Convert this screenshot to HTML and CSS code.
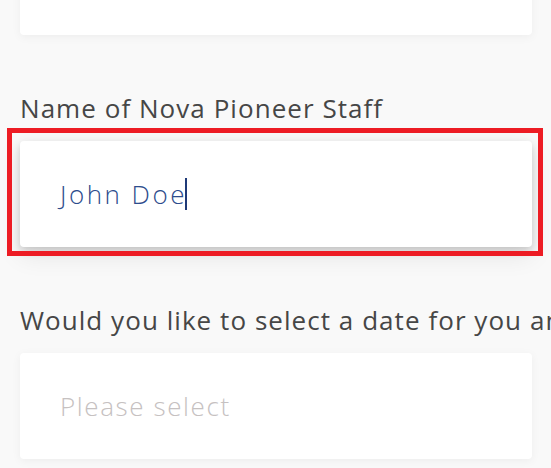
FILE: index.html
```html
<!DOCTYPE html>
<html lang="en">
<head>
<meta charset="utf-8">
<title>Form</title>
<link rel="stylesheet" href="styles.css">
</head>
<body>
  <main class="form">
    <div class="field field-first">
      <div class="card"></div>
    </div>
    <div class="field">
      <label class="label" for="staff">Name of Nova Pioneer Staff</label>
      <div class="card card-focus">
        <span class="value">John Doe</span><span class="caret"></span>
        <span class="highlight"></span>
      </div>
    </div>
    <div class="field">
      <label class="label">Would you like to select a date for you and your child to visit?</label>
      <div class="card">
        <span class="placeholder">Please select</span>
      </div>
    </div>
  </main>
</body>
</html>
```

FILE: styles.css
```css
html, body {
  margin: 0;
  padding: 0;
  height: 100%;
  overflow: hidden;
  background: #f9f9f9;
}

body {
  font-family: "Open Sans", "Liberation Sans", sans-serif;
}

.form {
  width: 512px;
  padding-left: 20px;
  display: flex;
  flex-direction: column;
}

.field-first {
  margin-top: -71px;
}

.field {
  display: flex;
  flex-direction: column;
}

.label {
  display: block;
  margin-top: 58px;
  margin-bottom: 18px;
  height: 30px;
  font-size: 26px;
  line-height: 30px;
  color: #464646;
  white-space: nowrap;
  letter-spacing: 1.05px;
}

.card {
  position: relative;
  height: 106px;
  background: #ffffff;
  border-radius: 4px;
  box-shadow: 0 2px 10px rgba(0, 0, 0, 0.05);
  display: flex;
  align-items: center;
  padding-left: 40px;
  box-sizing: border-box;
}

.card-focus {
  box-shadow: 0 4px 8px rgba(0, 0, 0, 0.16), 0 8px 26px rgba(0, 0, 0, 0.09);
}

.value {
  font-size: 26px;
  font-weight: 300;
  color: #2d4c8c;
  letter-spacing: 2.5px;
  margin-right: -2px;
}

.caret {
  display: inline-block;
  width: 2px;
  height: 32px;
  background: #1f3a78;
  margin-left: 0;
}

.placeholder {
  font-size: 26px;
  font-weight: 300;
  color: #c6c1c1;
  letter-spacing: 1.6px;
}

.highlight {
  position: absolute;
  left: -13px;
  right: -11px;
  top: -13px;
  bottom: -9px;
  border: 5px solid #ed1c24;
  pointer-events: none;
}
```
